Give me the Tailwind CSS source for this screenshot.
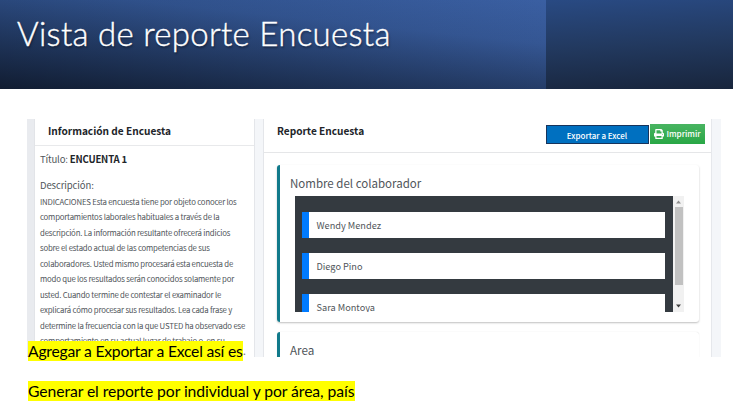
<!DOCTYPE html>
<html lang="es">
<head>
<meta charset="utf-8">
<title>Vista de reporte Encuesta</title>
<script src="https://cdn.jsdelivr.net/npm/@tailwindcss/browser@4"></script>
</head>
<body class="relative w-[733px] h-[420px] overflow-hidden bg-white whitespace-nowrap font-['Noto_Sans_CJK_SC','Noto_Sans',sans-serif] text-[#50555a]">
<header class="flex h-[89px] bg-[#22395f]">
  <div class="w-[546px] h-full pl-[17px] bg-[linear-gradient(186deg,#0f192b00_0%,#0f192b20_30%,#0f192b80_62%,#0f192bf0_100%),linear-gradient(to_right,#325694,#3a5fa2)]">
    <h1 class="pt-[9px] leading-[48px] text-[33px] tracking-[0.3px] font-light text-white font-['Lato',sans-serif] [-webkit-text-stroke:0.4px_white] [text-shadow:1px_2px_2px_#00000066]">Vista de reporte Encuesta</h1>
  </div>
  <div class="flex-1 bg-[linear-gradient(177deg,#294a83_0%,#22395f_50%,#18253c_100%)]"></div>
</header>
<main class="mt-[30px] ml-[27px] flex w-[694px] h-[238px] overflow-hidden bg-[#f4f6f9]">
  <div class="w-[8px] bg-[#e9ebef] border-r border-[#e2e4e8]"></div>
  <section class="w-[219px] bg-white">
    <h2 class="h-[27px] pl-[13px] leading-[24px] text-[10.1px] font-bold text-[#212529] border-b border-[#e8e9eb]">Información de Encuesta</h2>
    <div class="pl-[5px]">
      <p class="mt-[4px] h-[19px] leading-[19px] text-[9.6px] tracking-[-0.18px]">Título: <b class="text-[#212529]">ENCUENTA 1</b></p>
      <p class="mt-[7px] h-[18px] leading-[18px] text-[9.5px] tracking-[-0.1px]">Descripción:</p>
      <p class="leading-[15.45px] text-[7.8px] tracking-[-0.2px]">INDICACIONES Esta encuesta tiene por objeto conocer los<br>comportamientos laborales habituales a través de la<br>descripción. La información resultante ofrecerá indicios<br>sobre el estado actual de las competencias de sus<br>colaboradores. Usted mismo procesará esta encuesta de<br>modo que los resultados serán conocidos solamente por<br>usted. Cuando termine de contestar el examinador le<br>explicará cómo procesar sus resultados. Lea cada frase y<br>determine la frecuencia con la que USTED ha observado ese<br>comportamiento en su actual lugar de trabajo o, en su</p>
    </div>
  </section>
  <div class="w-[10px] border-x border-[#e4e6ea]"></div>
  <section class="w-[447px] bg-white">
    <div class="flex h-[33.5px] border-b border-[#e5e6e8] pl-[13px]">
      <h2 class="w-[269px] leading-[24px] text-[10.1px] font-bold text-[#212529]">Reporte Encuesta</h2>
      <button class="mt-[6px] w-[103px] h-[19px] pt-px pr-[1px] bg-[#0070c0] border border-[#17345c] text-white text-[8px] font-medium leading-[18px]">Exportar a Excel</button>
      <button class="mt-[5px] ml-px w-[55px] h-[20px] flex items-center justify-center gap-[2px] bg-linear-to-b from-[#48b461] to-[#28a745] text-white text-[8.1px] font-medium">
        <svg class="w-[10px] h-[10px]" viewBox="0 0 512 512" fill="currentColor"><path d="M448 192V77.300a32 32 0 0 0-9.400-22.600L393.400 9.400A32 32 0 0 0 370.700 0H96a32 32 0 0 0-32 32v160a64 64 0 0 0-64 64v112a16 16 0 0 0 16 16h48v96a32 32 0 0 0 32 32h320a32 32 0 0 0 32-32v-96h48a16 16 0 0 0 16-16V256a64 64 0 0 0-64-64zm-64 256H128v-96h256zm0-224H128V64h192v48a16 16 0 0 0 16 16h48zm48 72a24 24 0 1 1 0-48 24 24 0 0 1 0 48z"/></svg>
        <span>Imprimir</span>
      </button>
    </div>
    <div class="mt-[12.5px] ml-[13px] w-[422px] h-[157px] border-l-[3px] border-[#117a8b] rounded-[3px] shadow-[0_1px_2px_#00000040] pl-[10px] pt-[8px]">
      <h3 class="h-[23px] leading-[20px] text-[11.5px]">Nombre del colaborador</h3>
      <div class="ml-[5px] w-[389px] h-[115.5px] flex overflow-hidden">
        <div class="w-[378px] bg-[#343a40] pl-[7px] pt-[16px] flex flex-col gap-[15px] text-[9.2px] leading-[26px]">
          <div class="shrink-0 w-[363px] h-[26px] pl-[7.5px] bg-white border-l-[7px] border-[#007bff]">Wendy Mendez</div>
          <div class="shrink-0 w-[363px] h-[26px] pl-[7.5px] bg-white border-l-[7px] border-[#007bff]">Diego Pino</div>
          <div class="shrink-0 w-[363px] h-[26px] pl-[7.5px] bg-white border-l-[7px] border-[#007bff]">Sara Montoya</div>
        </div>
        <div class="w-[11px] bg-[#f1f1f1] flex flex-col items-center">
          <svg class="h-[11px] w-[5px]" viewBox="0 0 5 11"><path d="M0 7.500 2.500 4.500 5 7.500z" fill="#8d8d8d"/></svg>
          <div class="w-[8px] h-[78px] bg-[#c1c1c1]"></div>
          <svg class="mt-[15px] h-[11px] w-[5px]" viewBox="0 0 5 11"><path d="M0 4.500h5L2.500 7.500z" fill="#404040"/></svg>
        </div>
      </div>
    </div>
    <div class="mt-[10px] ml-[13px] w-[422px] h-[60px] border-l-[3px] border-[#117a8b] rounded-[3px] shadow-[0_0_1px_#00000030] pl-[10px] pt-[8px]">
      <h3 class="leading-[20px] text-[11.7px]">Area</h3>
    </div>
  </section>
  <div class="w-[10px] border-l border-[#e6e8ec]"></div>
</main>
<div class="absolute left-[28px] top-[341px] font-['Lato',sans-serif] text-black text-[15.7px] leading-[20px]">
  <p class="flex"><span class="w-[215px] tracking-[-0.22px] bg-[#ffff00]">Agregar a Exportar a Excel así es</span><span class="text-[#777] text-[12px]">.</span></p>
  <p class="mt-[20px] w-[327px] tracking-[-0.07px] bg-[#ffff00]">Generar el reporte por individual y por área, país</p>
</div>
</body>
</html>
